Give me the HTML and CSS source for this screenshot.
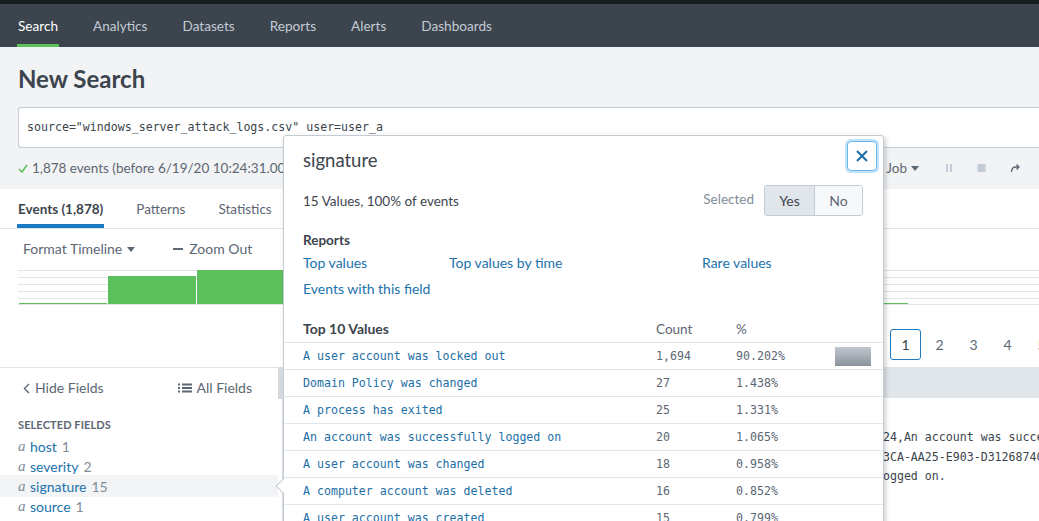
FILE: index.html
```html
<!DOCTYPE html>
<html lang="en">
<head>
<meta charset="utf-8">
<title>New Search</title>
<link rel="stylesheet" href="styles.css">
</head>
<body>
<div class="topstrip"></div>
<nav class="appbar">
  <a class="navtab active">Search</a>
  <a class="navtab">Analytics</a>
  <a class="navtab">Datasets</a>
  <a class="navtab">Reports</a>
  <a class="navtab">Alerts</a>
  <a class="navtab">Dashboards</a>
</nav>

<header class="searchhead">
  <h1 class="title">New Search</h1>
  <div class="searchbox">source="windows_server_attack_logs.csv" user=user_a</div>
  <div class="status">
    <div class="status-left">
      <svg class="check" width="10" height="9" viewBox="0 0 10 9"><polyline points="1,5 4,8 9,1" fill="none" stroke="#5cc05c" stroke-width="1.5"/></svg>
      <span>1,878 events (before 6/19/20 10:24:31.000 PM)</span>
    </div>
    <div class="status-right">
      <span class="job">Job <span class="caret"></span></span>
      <svg width="8" height="10" viewBox="0 0 8 10"><rect x="1" y="1" width="2" height="8" fill="#c3cbd4"/><rect x="5" y="1" width="2" height="8" fill="#c3cbd4"/></svg>
      <svg width="9" height="10" viewBox="0 0 9 10"><rect x="0.5" y="1" width="8" height="8" fill="#c3cbd4"/></svg>
      <svg width="10" height="10" viewBox="0 0 10 10"><path d="M1.5 9 Q1.5 4 6 4 H9 M6.5 1.5 L9 4 L6.5 6.5" fill="none" stroke="#5c6773" stroke-width="1.3"/></svg>
    </div>
  </div>
</header>

<div class="tabs">
  <span class="tab active">Events (1,878)</span>
  <span class="tab">Patterns</span>
  <span class="tab">Statistics</span>
  <span class="tab">Visualization</span>
</div>

<div class="tlctl">
  <span class="tlbtn">Format Timeline <span class="caret"></span></span>
  <span class="tlbtn"><span class="minus"></span>Zoom Out</span>
  <span class="tlbtn">+ Zoom to Selection</span>
</div>

<div class="chart">
  <span class="bar" style="height:1px"></span>
  <span class="bar" style="height:28px"></span>
  <span class="bar" style="height:34px"></span>
  <span class="bar" style="height:30px"></span>
  <span class="bar" style="height:31px"></span>
  <span class="bar" style="height:29px"></span>
  <span class="bar" style="height:27px"></span>
  <span class="bar" style="height:30px"></span>
  <span class="bar" style="height:26px"></span>
  <span class="bar" style="height:1px"></span>
  <span class="bar" style="height:0px"></span>
</div>

<div class="pagerow">
  <div class="pager">
    <span class="page current">1</span>
    <span class="page">2</span>
    <span class="page">3</span>
    <span class="page">4</span>
    <span class="page">5</span>
  </div>
</div>

<div class="main">
  <aside class="sidebar">
    <div class="side-head">
      <span class="side-link"><svg width="7" height="11" viewBox="0 0 7 11"><polyline points="6,1 1.5,5.5 6,10" fill="none" stroke="#5c6773" stroke-width="1.4"/></svg>Hide Fields</span>
      <span class="side-link"><svg width="14" height="10" viewBox="0 0 14 10"><rect x="0" y="0.5" width="2" height="2" fill="#5c6773"/><rect x="0" y="4" width="2" height="2" fill="#5c6773"/><rect x="0" y="7.5" width="2" height="2" fill="#5c6773"/><rect x="4" y="0.5" width="10" height="2" fill="#5c6773"/><rect x="4" y="4" width="10" height="2" fill="#5c6773"/><rect x="4" y="7.5" width="10" height="2" fill="#5c6773"/></svg>All Fields</span>
    </div>
    <div class="side-label">SELECTED FIELDS</div>
    <ul class="fields">
      <li class="field"><i class="ftype">a</i><span class="fname">host</span><span class="fcount">1</span></li>
      <li class="field"><i class="ftype">a</i><span class="fname">severity</span><span class="fcount">2</span></li>
      <li class="field hl"><i class="ftype">a</i><span class="fname">signature</span><span class="fcount">15</span></li>
      <li class="field"><i class="ftype">a</i><span class="fname">source</span><span class="fcount">1</span></li>
    </ul>
  </aside>
  <div class="scrollbar"><div class="thumb"></div></div>
  <section class="results">
    <div class="results-head"></div>
    <div class="event">06/19/2020 10:24:31.000,user_a,DC01,2020-06-19 10:24:24,An account was successfully logged on,4624,Success
Security ID: S-1-5-21-1004336 Logon GUID: {6F2B19E4-B3CA-AA25-E903-D31268740C1F}
Logon Type: 10, Message=An account was successfully logged on.</div>
  </section>
</div>

<div class="popup">
  <span class="popup-arrow"></span>
  <div class="pop-head">
    <h2 class="pop-title">signature</h2>
    <button class="close" type="button"><svg width="12" height="12" viewBox="0 0 12 12"><path d="M1 1 L11 11 M11 1 L1 11" stroke="#1c6ea6" stroke-width="2"/></svg></button>
  </div>
  <div class="pop-summary">
    <span>15 Values, 100% of events</span>
    <div class="selected">
      <span class="sel-label">Selected</span>
      <div class="btngroup"><span class="btn on">Yes</span><span class="btn">No</span></div>
    </div>
  </div>
  <div class="reports">
    <div class="reports-title">Reports</div>
    <div class="report-links">
      <a>Top values</a>
      <a>Top values by time</a>
      <a>Rare values</a>
      <a>Events with this field</a>
    </div>
  </div>
  <div class="topvals">
    <div class="tv-row tv-head"><span class="tv-title">Top 10 Values</span><span>Count</span><span>%</span><span></span></div>
    <div class="tv-row"><a class="tv-val">A user account was locked out</a><span class="tv-num">1,694</span><span class="tv-num">90.202%</span><span class="tv-bar"></span></div>
    <div class="tv-row"><a class="tv-val">Domain Policy was changed</a><span class="tv-num">27</span><span class="tv-num">1.438%</span><span></span></div>
    <div class="tv-row"><a class="tv-val">A process has exited</a><span class="tv-num">25</span><span class="tv-num">1.331%</span><span></span></div>
    <div class="tv-row"><a class="tv-val">An account was successfully logged on</a><span class="tv-num">20</span><span class="tv-num">1.065%</span><span></span></div>
    <div class="tv-row"><a class="tv-val">A user account was changed</a><span class="tv-num">18</span><span class="tv-num">0.958%</span><span></span></div>
    <div class="tv-row"><a class="tv-val">A computer account was deleted</a><span class="tv-num">16</span><span class="tv-num">0.852%</span><span></span></div>
    <div class="tv-row"><a class="tv-val">A user account was created</a><span class="tv-num">15</span><span class="tv-num">0.799%</span><span></span></div>
  </div>
</div>
</body>
</html>
```

FILE: styles.css
```css
* { box-sizing: border-box; }

html, body {
  margin: 0;
  padding: 0;
}

body {
  width: 1039px;
  height: 521px;
  overflow: hidden;
  position: relative;
  background: #ffffff;
  color: #3c444d;
  font-family: Lato, "Open Sans", "Liberation Sans", sans-serif;
  font-size: 14px;
}

.topstrip {
  height: 4px;
  background: #171d21;
}

/* ---------- app bar ---------- */
.appbar {
  height: 43px;
  background: #3c444d;
  display: flex;
  gap: 33px;
  padding-left: 17px;
}

.navtab {
  color: #c3cbd4;
  font-size: 13.6px;
  line-height: 38px;
  padding: 3px 1px 0;
  border-bottom: 3px solid transparent;
}

.navtab.active {
  color: #ffffff;
  border-bottom-color: #5cc05c;
}

/* ---------- search header ---------- */
.searchhead {
  background: #f2f3f5;
  padding: 20px 0 11px 18px;
}

.title {
  margin: 0;
  font-size: 24px;
  font-weight: 700;
  line-height: 24px;
  color: #3c444d;
}

.searchbox {
  margin-top: 16px;
  height: 41px;
  background: #ffffff;
  border: 1px solid #c3cbd4;
  border-right: none;
  border-radius: 3px 0 0 3px;
  padding: 0 8px 1px;
  display: flex;
  align-items: center;
  font-family: "DejaVu Sans Mono", monospace;
  font-size: 11.6px;
  color: #3c444d;
}

.status {
  margin-top: 10px;
  height: 20px;
  display: flex;
  align-items: center;
  justify-content: space-between;
  padding-right: 19px;
  font-size: 13.5px;
  color: #5c6773;
}

.status-left {
  display: flex;
  align-items: center;
  gap: 4px;
  white-space: nowrap;
}

.status-right {
  display: flex;
  align-items: center;
  gap: 24px;
}

.job {
  display: flex;
  align-items: center;
  gap: 4px;
  margin-right: 2px;
  margin-left: -2px;
}

.caret {
  display: inline-block;
  width: 0;
  height: 0;
  border-left: 4px solid transparent;
  border-right: 4px solid transparent;
  border-top: 5px solid #5c6773;
}

/* ---------- tabs ---------- */
.tabs {
  height: 40px;
  display: flex;
  align-items: flex-end;
  gap: 31px;
  padding-left: 17px;
  border-bottom: 1px solid #e1e6eb;
}

.tab {
  font-size: 13.5px;
  line-height: 20px;
  padding: 0 1px 5px;
  border-bottom: 4px solid transparent;
  color: #5c6773;
}

.tab.active {
  color: #3c444d;
  font-weight: 700;
  border-bottom-color: #1a7bc4;
}

/* ---------- timeline ---------- */
.tlctl {
  display: flex;
  align-items: flex-start;
  gap: 38px;
  padding: 10px 0 0 23px;
  height: 41px;
  font-size: 14px;
  line-height: 20px;
  color: #5c6773;
}

.tlbtn {
  display: flex;
  align-items: center;
  gap: 5px;
  height: 20px;
}

.minus {
  display: inline-block;
  width: 10px;
  height: 1.5px;
  background: #5c6773;
  margin-right: 1px;
}

.chart {
  margin-left: 18px;
  width: 1021px;
  height: 35px;
  display: flex;
  align-items: flex-end;
  gap: 1px;
  padding: 0 0 1px 1px;
  overflow: hidden;
  background-color: #ffffff;
  background-image:
    linear-gradient(#e2e5e8, #e2e5e8),
    linear-gradient(#e2e5e8, #e2e5e8),
    linear-gradient(#e2e5e8, #e2e5e8),
    linear-gradient(#e2e5e8, #e2e5e8),
    linear-gradient(#e2e5e8, #e2e5e8),
    linear-gradient(#e2e5e8, #e2e5e8);
  background-repeat: no-repeat;
  background-size: 100% 1px;
  background-position: 0 0, 0 7px, 0 14px, 0 21px, 0 28px, 0 34px;
}

.bar {
  width: 88px;
  background: #5cc05c;
  flex: none;
}

/* ---------- pager ---------- */
.pagerow {
  padding-top: 24px;
  height: 62px;
}

.pager {
  margin-left: 890px;
  display: flex;
  gap: 3px;
  font-size: 14px;
}

.page {
  width: 31px;
  height: 31px;
  display: flex;
  align-items: center;
  justify-content: center;
  color: #5c6773;
  border: 1px solid transparent;
  border-radius: 3px;
  flex: none;
}

.page.current {
  border-color: #1a7bc4;
  color: #3c444d;
}

/* ---------- main ---------- */
.main {
  display: flex;
  height: 160px;
}

.sidebar {
  width: 278px;
  flex: none;
  border-top: 1px solid #e1e6eb;
}

.scrollbar {
  width: 5px;
  flex: none;
  border-right: 1px solid #dfe3e7;
}

.thumb {
  height: 32px;
  width: 4px;
  background: #d5dade;
}

.side-head {
  display: flex;
  justify-content: space-between;
  padding: 10px 26px 0 23px;
  line-height: 20px;
  font-size: 14px;
  color: #5c6773;
}

.side-link {
  display: flex;
  align-items: center;
  gap: 4px;
}

.side-link svg {
  margin-right: 1px;
}

.side-label {
  margin-top: 19px;
  padding-left: 18px;
  font-size: 11px;
  font-weight: 700;
  line-height: 16px;
  color: #5c6773;
  letter-spacing: 0.1px;
}

.fields {
  list-style: none;
  margin: 3px 0 0;
  padding: 0;
}

.field {
  height: 20px;
  display: flex;
  align-items: center;
  padding-left: 18px;
  font-size: 14px;
}

.field.hl {
  background: #f2f4f5;
  height: 22px;
  margin: -1px 0;
}

.ftype {
  font-family: "Liberation Serif", serif;
  font-size: 15px;
  color: #818d99;
  width: 12px;
}

.fname {
  color: #1c73ad;
  margin-right: 5px;
}

.fcount {
  color: #818d99;
}

.results {
  flex: 1;
  min-width: 0;
}

.results-head {
  height: 31px;
  background: #e1e6eb;
}

.event {
  margin-top: 30px;
  padding-left: 230px;
  white-space: pre;
  font-family: "DejaVu Sans Mono", monospace;
  font-size: 11.6px;
  line-height: 19.5px;
  color: #3c444d;
}

/* ---------- popup ---------- */
.popup {
  position: absolute;
  left: 283px;
  top: 135px;
  width: 601px;
  height: 430px;
  background: #ffffff;
  border: 1px solid #c3cbd4;
  border-radius: 3px;
  box-shadow: 2px 2px 5px rgba(0, 0, 0, 0.18);
}

.popup-arrow {
  position: absolute;
  left: -6px;
  top: 344px;
  width: 12px;
  height: 12px;
  background: #ffffff;
  border-left: 1px solid #c3cbd4;
  border-bottom: 1px solid #c3cbd4;
  transform: rotate(45deg);
}

.pop-head {
  display: flex;
  justify-content: space-between;
  align-items: flex-start;
  padding: 5px 5px 0 19px;
}

.pop-title {
  margin: 8px 0 0;
  font-size: 18.5px;
  font-weight: 400;
  line-height: 22px;
  color: #3c444d;
}

.close {
  width: 30px;
  height: 30px;
  padding: 0;
  background: #ffffff;
  border: 1px solid #6ab7ee;
  border-radius: 4px;
  box-shadow: 0 0 0 2px #c2e2f9;
  display: flex;
  align-items: center;
  justify-content: center;
  margin-right: 1px;
}

.pop-summary {
  margin-top: 14px;
  display: flex;
  align-items: center;
  justify-content: space-between;
  padding: 0 20px 0 19px;
  font-size: 13.5px;
  color: #3c444d;
}

.selected {
  display: flex;
  align-items: center;
  gap: 10px;
}

.sel-label {
  color: #818d99;
  margin-top: -4px;
}

.btngroup {
  display: flex;
  border: 1px solid #c3cbd4;
  border-radius: 3px;
  overflow: hidden;
}

.btn {
  height: 29px;
  display: flex;
  align-items: center;
  justify-content: center;
  font-size: 14px;
  color: #5c6773;
  background: #f7f8fa;
  width: 47px;
}

.btn.on {
  width: 50px;
  background: #e1e6eb;
  border-right: 1px solid #c3cbd4;
  color: #3c444d;
}

.reports {
  padding: 0 19px;
  margin-top: 14px;
}

.reports-title {
  font-weight: 700;
  font-size: 13.5px;
  line-height: 20px;
}

.report-links {
  margin-top: 3px;
  display: grid;
  grid-template-columns: 146px 253px auto;
  row-gap: 6px;
  line-height: 20px;
  font-size: 14px;
}

.report-links a {
  color: #1c73ad;
}

.topvals {
  margin-top: 16px;
}

.tv-row {
  display: grid;
  grid-template-columns: 353px 80px 99px 36px;
  align-items: center;
  height: 27px;
  padding-left: 19px;
  border-bottom: 1px solid #e1e6eb;
  font-family: "DejaVu Sans Mono", monospace;
  font-size: 11.6px;
  white-space: nowrap;
}

.tv-head {
  height: 28px;
  font-family: Lato, "Open Sans", sans-serif;
  font-size: 13.5px;
  color: #5c6773;
}

.tv-title {
  font-weight: 700;
  font-size: 14px;
  color: #3c444d;
}

.tv-val {
  color: #1c6ea6;
  overflow: hidden;
}

.tv-num {
  color: #5c6773;
}

.tv-bar {
  height: 19px;
  background: linear-gradient(to bottom, #c1c7ce, #8a939d);
}
```
